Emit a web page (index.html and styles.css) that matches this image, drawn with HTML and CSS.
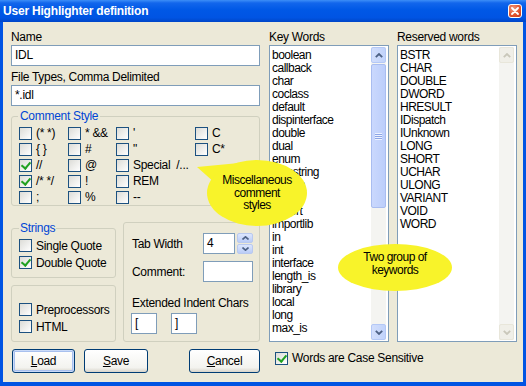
FILE: index.html
```html
<!DOCTYPE html>
<html lang="en">

<head>
  <meta charset="UTF-8">
  <title>User Highlighter definition</title>
  <link rel="stylesheet" href="styles.css">
</head>

<body>

  <div class="window">
    <div class="titlebar">
      <span class="title">User Highlighter definition</span>
      <span class="close">
        <svg width="8" height="8" viewBox="0 0 8 8"><path d="M1 1L7 7M7 1L1 7" stroke="#fff" stroke-width="1.8" stroke-linecap="round"/></svg>
      </span>
    </div>

    <div class="frame">
      <div class="left">
        <label class="lbl">Name</label>
        <div class="edit">IDL</div>
        <label class="lbl lbl-next">File Types, Comma Delimited</label>
        <div class="edit">*.idl</div>

        <fieldset class="group comment-style">
          <legend>Comment Style</legend>
          <div class="cb-grid">
            <span class="chk"><span class="cb"></span>(* *)</span>
            <span class="chk"><span class="cb"></span>* &amp;&amp;</span>
            <span class="chk"><span class="cb"></span>'</span>
            <span class="chk"><span class="cb"></span>C</span>

            <span class="chk"><span class="cb"></span>{ }</span>
            <span class="chk"><span class="cb"></span>#</span>
            <span class="chk"><span class="cb"></span>"</span>
            <span class="chk"><span class="cb"></span>C*</span>

            <span class="chk"><span class="cb on"></span>//</span>
            <span class="chk"><span class="cb"></span>@</span>
            <span class="chk"><span class="cb"></span>Special&nbsp; /...</span>
            <span></span>

            <span class="chk"><span class="cb on"></span>/* */</span>
            <span class="chk"><span class="cb"></span>!</span>
            <span class="chk"><span class="cb"></span>REM</span>
            <span></span>

            <span class="chk"><span class="cb"></span>;</span>
            <span class="chk"><span class="cb"></span>%</span>
            <span class="chk"><span class="cb"></span>--</span>
            <span></span>
          </div>
        </fieldset>

        <div class="lower">
          <div class="lower-left">
            <fieldset class="group strings">
              <legend>Strings</legend>
              <div class="chk row17"><span class="cb"></span>Single Quote</div>
              <div class="chk row17"><span class="cb on"></span>Double Quote</div>
            </fieldset>
            <div class="group misc">
              <div class="chk row17"><span class="cb"></span>Preprocessors</div>
              <div class="chk row17"><span class="cb"></span>HTML</div>
            </div>
          </div>

          <div class="group options">
            <div class="opt-row">
              <span class="opt-label">Tab Width</span>
              <div class="edit tab">4</div>
              <div class="spin">
                <span class="spin-btn">
                  <svg width="7" height="4" viewBox="0 0 7 4"><path d="M0.5 3.5L3.5 0.8L6.5 3.5" fill="none" stroke="#4D6185" stroke-width="1.6"/></svg>
                </span>
                <span class="spin-btn">
                  <svg width="7" height="4" viewBox="0 0 7 4"><path d="M0.5 0.5L3.5 3.2L6.5 0.5" fill="none" stroke="#4D6185" stroke-width="1.6"/></svg>
                </span>
              </div>
            </div>
            <div class="opt-row opt-comment">
              <span class="opt-label">Comment:</span>
              <div class="edit wide"></div>
            </div>
            <div class="lbl ext-label">Extended Indent Chars</div>
            <div class="indent-row">
              <div class="edit small">[</div>
              <div class="edit small">]</div>
            </div>
          </div>
        </div>

        <div class="buttons">
          <button class="btn btn-default"><u>L</u>oad</button>
          <button class="btn btn-save"><u>S</u>ave</button>
          <button class="btn btn-cancel"><u>C</u>ancel</button>
        </div>
      </div>

      <div class="right">
        <div class="lists">
          <div class="list-col">
            <div class="lbl">Key Words</div>
            <div class="listbox">
              <ul class="items">
                <li>boolean</li>
                <li>callback</li>
                <li>char</li>
                <li>coclass</li>
                <li>default</li>
                <li>dispinterface</li>
                <li>double</li>
                <li>dual</li>
                <li>enum</li>
                <li>helpstring</li>
                <li>hidden</li>
                <li>id</li>
                <li>import</li>
                <li>importlib</li>
                <li>in</li>
                <li>int</li>
                <li>interface</li>
                <li>length_is</li>
                <li>library</li>
                <li>local</li>
                <li>long</li>
                <li>max_is</li>
              </ul>
              <div class="scrollbar">
                <span class="sb-btn">
                  <svg width="8" height="5" viewBox="0 0 8 5"><path d="M0.8 4.2L4 1L7.2 4.2" fill="none" stroke="#4D6185" stroke-width="1.8"/></svg>
                </span>
                <span class="sb-thumb"><span class="grip"></span></span>
                <span class="sb-track"></span>
                <span class="sb-btn">
                  <svg width="8" height="5" viewBox="0 0 8 5"><path d="M0.8 0.8L4 4L7.2 0.8" fill="none" stroke="#4D6185" stroke-width="1.8"/></svg>
                </span>
              </div>
            </div>
          </div>

          <div class="list-col">
            <div class="lbl">Reserved words</div>
            <div class="listbox">
              <ul class="items">
                <li>BSTR</li>
                <li>CHAR</li>
                <li>DOUBLE</li>
                <li>DWORD</li>
                <li>HRESULT</li>
                <li>IDispatch</li>
                <li>IUnknown</li>
                <li>LONG</li>
                <li>SHORT</li>
                <li>UCHAR</li>
                <li>ULONG</li>
                <li>VARIANT</li>
                <li>VOID</li>
                <li>WORD</li>
              </ul>
              <div class="scrollbar off">
                <span class="sb-btn">
                  <svg width="8" height="5" viewBox="0 0 8 5"><path d="M0.8 4.2L4 1L7.2 4.2" fill="none" stroke="#C9C7BA" stroke-width="1.8"/></svg>
                </span>
                <span class="sb-track"></span>
                <span class="sb-btn">
                  <svg width="8" height="5" viewBox="0 0 8 5"><path d="M0.8 0.8L4 4L7.2 0.8" fill="none" stroke="#C9C7BA" stroke-width="1.8"/></svg>
                </span>
              </div>
            </div>
          </div>
        </div>

        <div class="chk case"><span class="cb on"></span>Words are Case Sensitive</div>
      </div>

      <!-- yellow notes laid over the dialog -->
      <div class="callout callout-misc">
        <svg width="114" height="71" viewBox="0 0 114 71">
          <path d="M2 10L44 6L20 26Z" fill="#F8F32A"/>
          <ellipse cx="62" cy="36" rx="50" ry="33" fill="#F8F32A"/>
        </svg>
        <div class="callout-text">Miscellaneous<br>comment<br>styles</div>
      </div>

      <div class="callout callout-keys">
        <svg width="114" height="47" viewBox="0 0 114 47">
          <ellipse cx="57" cy="23.5" rx="57" ry="23.5" fill="#F8F32A"/>
        </svg>
        <div class="callout-text">Two group of<br>keywords</div>
      </div>
    </div>
  </div>

</body>

</html>
```

FILE: styles.css
```css
* {
  box-sizing: border-box;
}

body {
  margin: 0;
  font-family: "Liberation Sans", Arial, sans-serif;
  font-size: 12px;
  letter-spacing: -0.3px;
  color: #000;
  background: #fff;
}

.window {
  width: 526px;
  height: 386px;
  display: flex;
  flex-direction: column;
}

.titlebar {
  height: 22px;
  flex: none;
  display: flex;
  align-items: center;
  justify-content: space-between;
  padding: 0 4px 0 3px;
  background: linear-gradient(#3D8EF7 0, #1266EC 3px, #0058E6 45%, #0054E3 80%, #0046C8 100%);
}

.title {
  color: #fff;
  font-weight: bold;
  font-size: 12px;
  letter-spacing: -0.2px;
}

.close {
  width: 14px;
  height: 14px;
  display: flex;
  align-items: center;
  justify-content: center;
  border: 1px solid #fff;
  border-radius: 3px;
  background: radial-gradient(circle at 35% 30%, #F09A80, #E2552F 55%, #C1391A);
}

.frame {
  flex: 1;
  display: flex;
  gap: 9px;
  padding: 8px 6px 0 8px;
  background: #ECE9D8;
  border: solid #0054E3;
  border-width: 0 3px 4px 3px;
  position: relative;
}

.left {
  width: 249px;
  display: flex;
  flex-direction: column;
}

.lbl {
  display: block;
  height: 14px;
  line-height: 14px;
  white-space: nowrap;
}

.lbl-next {
  margin-top: 4px;
}

.edit {
  height: 21px;
  margin-top: 1px;
  padding: 0 3px;
  line-height: 19px;
  border: 1px solid #7F9DB9;
  background: #fff;
}

.group {
  margin: 0;
  min-width: 0;
  border: 1px solid #D0D0BF;
  border-radius: 3px;
}

.group legend {
  padding: 0 2px;
  line-height: 14px;
  color: #0046D5;
}

.comment-style {
  margin-top: 3px;
  padding: 2px 6px 0;
}

.cb-grid {
  display: grid;
  grid-template-columns: 49px 48px 79px 1fr;
  grid-auto-rows: 16px;
  padding-left: 1px;
}

.chk {
  display: flex;
  align-items: center;
  gap: 4px;
  white-space: nowrap;
}

.cb {
  width: 13px;
  height: 13px;
  flex: none;
  position: relative;
  border: 1px solid #1C5180;
  background: linear-gradient(135deg, #DCDCD7, #FFFFFF);
}

.cb.on::after {
  content: "";
  position: absolute;
  left: 3px;
  top: 0;
  width: 4px;
  height: 7px;
  border: solid #21A121;
  border-width: 0 2px 2px 0;
  transform: rotate(40deg);
}

.lower {
  display: flex;
  gap: 7px;
  margin-top: 15px;
}

.lower-left {
  width: 105px;
  display: flex;
  flex-direction: column;
  gap: 7px;
}

.strings {
  padding: 2px 6px 6px 7px;
}

.strings legend {
  padding: 0 1px;
}

.row17 {
  height: 17px;
}

.misc {
  height: 57px;
  padding: 15px 6px 0 7px;
}

.options {
  flex: 1;
  margin-top: 1px;
  padding: 10px 6px 0 8px;
}

.opt-row {
  display: flex;
  align-items: center;
  height: 21px;
}

.opt-label {
  width: 71px;
}

.opt-row .edit {
  margin-top: 0;
}

.edit.tab {
  width: 32px;
}

.spin {
  width: 16px;
  height: 21px;
  margin-left: 2px;
  display: flex;
  flex-direction: column;
  gap: 1px;
}

.spin-btn {
  flex: 1;
  display: flex;
  align-items: center;
  justify-content: center;
  border: 1px solid #B9C9EF;
  border-radius: 2px;
  background: linear-gradient(#DCE6FD, #BACCF7);
}

.opt-comment {
  margin-top: 7px;
}

.edit.wide {
  width: 50px;
}

.ext-label {
  margin-top: 14px;
}

.indent-row {
  display: flex;
  gap: 14px;
  margin-top: 2px;
  margin-left: -1px;
}

.edit.small {
  width: 26px;
}

.buttons {
  display: flex;
  margin-top: 7px;
  padding-left: 1px;
}

.btn {
  height: 24px;
  padding: 0;
  font: inherit;
  letter-spacing: inherit;
  color: #000;
  border: 1px solid #003C74;
  border-radius: 3px;
  background: linear-gradient(#FFFFFF, #F3F3EF 80%, #D8D4CA);
}

.btn-default {
  width: 63px;
  box-shadow: inset 0 0 0 1px #C9DAF8, inset 0 0 0 2px #A8C0EE;
}

.btn-save {
  width: 64px;
  margin-left: 9px;
}

.btn-cancel {
  width: 71px;
  margin-left: auto;
}

.right {
  width: 248px;
  display: flex;
  flex-direction: column;
}

.lists {
  display: flex;
  gap: 8px;
}

.list-col {
  width: 120px;
}

.listbox {
  height: 297px;
  margin-top: 1px;
  display: flex;
  border: 1px solid #7F9DB9;
  background: #fff;
}

.items {
  flex: 1;
  margin: 0;
  padding: 3px 0 0 2px;
  list-style: none;
  line-height: 13px;
  letter-spacing: -0.5px;
  overflow: hidden;
}

.scrollbar {
  width: 15px;
  margin: 1px 2px 1px 0;
  display: flex;
  flex-direction: column;
  background: #F4F4F1;
}

.sb-btn {
  height: 16px;
  flex: none;
  display: flex;
  align-items: center;
  justify-content: center;
  border: 1px solid #B4C8F6;
  border-radius: 2px;
  background: linear-gradient(90deg, #D2DEFC, #C1D3FB);
}

.sb-thumb {
  height: 144px;
  flex: none;
  margin-top: 1px;
  display: flex;
  align-items: center;
  justify-content: center;
  border: 1px solid #A9BDF0;
  border-radius: 2px;
  background: linear-gradient(90deg, #CAD8FD, #BCCEFB);
}

.grip {
  width: 7px;
  height: 7px;
  background: repeating-linear-gradient(#EEF3FF 0 1px, #8CA5E6 1px 2px);
}

.sb-track {
  flex: 1;
}

.scrollbar.off .sb-btn {
  border-color: #E8E6DA;
  background: #F0EFE8;
}

.case {
  margin-top: 9px;
  padding-left: 6px;
}

.callout {
  position: absolute;
}

.callout svg {
  position: absolute;
  left: 0;
  top: 0;
}

.callout-text {
  position: absolute;
  display: flex;
  align-items: center;
  justify-content: center;
  text-align: center;
  line-height: 12.5px;
  letter-spacing: -0.5px;
}

.callout-misc {
  left: 192px;
  top: 135px;
  width: 114px;
  height: 71px;
}

.callout-misc .callout-text {
  left: 12px;
  top: 3px;
  width: 100px;
  height: 66px;
}

.callout-keys {
  left: 335px;
  top: 222px;
  width: 114px;
  height: 47px;
}

.callout-keys .callout-text {
  left: 0;
  top: 0;
  width: 114px;
  height: 47px;
  padding-bottom: 8px;
}
```
